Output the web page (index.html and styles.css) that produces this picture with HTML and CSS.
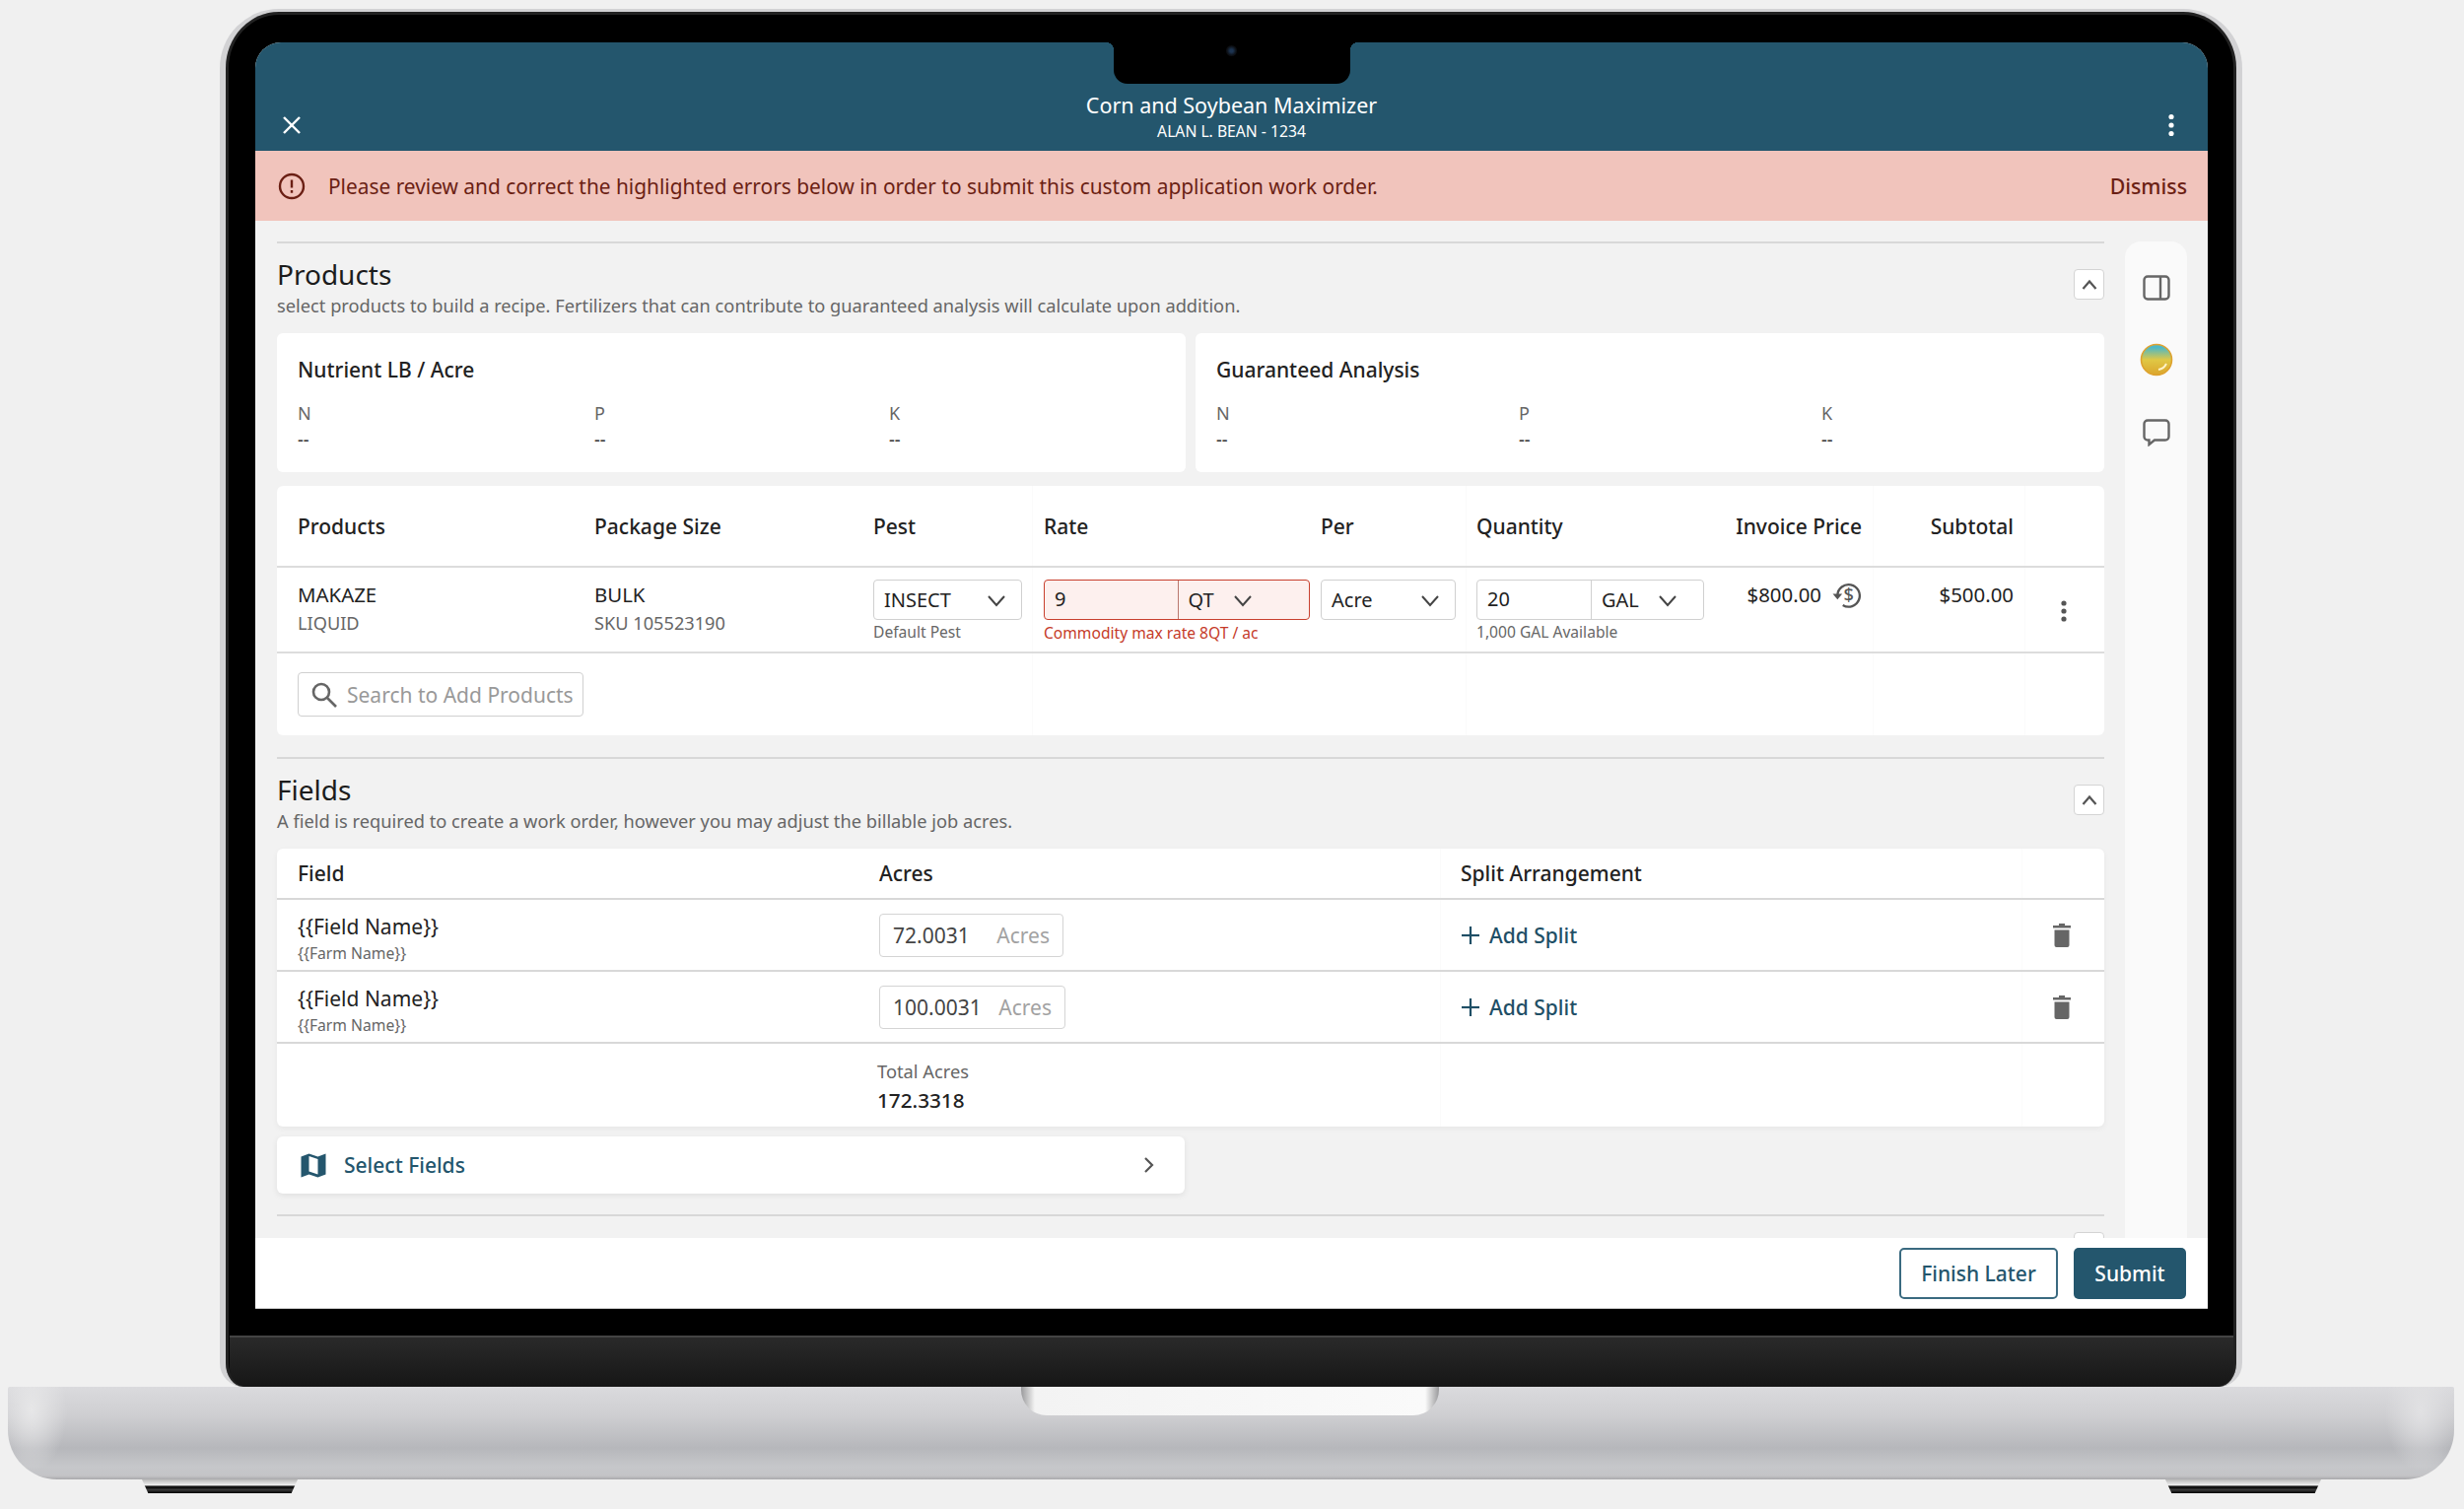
FILE: index.html
```html
<!DOCTYPE html>
<html lang="en">
<head>
    <meta charset="UTF-8">
    <meta name="viewport" content="width=device-width, initial-scale=1.0">
    <title>Corn and Soybean Maximizer</title>
    <link rel="stylesheet" href="styles.css">
</head>
<body>
    <div class="laptop">
        <div class="lid">
            <div class="screen">
                <!-- Camera notch -->
                <div class="notch"><span class="camera"></span></div>

                <!-- App bar -->
                <header class="appbar">
                    <svg class="appbar-close" width="24" height="24" viewBox="0 0 24 24" fill="none" stroke="#fff" stroke-width="2.4"><line x1="4" y1="4" x2="20" y2="20"></line><line x1="20" y1="4" x2="4" y2="20"></line></svg>
                    <div class="appbar-title">
                        <div class="appbar-name">Corn and Soybean Maximizer</div>
                        <div class="appbar-sub">ALAN L. BEAN - 1234</div>
                    </div>
                    <svg class="appbar-more" width="24" height="24" viewBox="0 0 24 24" fill="#fff"><circle cx="12" cy="3.5" r="2.6"></circle><circle cx="12" cy="12" r="2.6"></circle><circle cx="12" cy="20.5" r="2.6"></circle></svg>
                </header>

                <!-- Error banner -->
                <div class="alert">
                    <svg width="28" height="28" viewBox="0 0 28 28" fill="none" stroke="#6b1f14" stroke-width="2.4"><circle cx="14" cy="14" r="12"></circle><line x1="14" y1="7.5" x2="14" y2="15.5"></line><line x1="14" y1="18" x2="14" y2="20.8"></line></svg>
                    <span class="alert-text">Please review and correct the highlighted errors below in order to submit this custom application work order.</span>
                    <span class="alert-dismiss">Dismiss</span>
                </div>

                <div class="main">
                    <div class="content">
                        <!-- Products section -->
                        <section class="section">
                            <div class="section-head">
                                <div>
                                    <h2 class="section-title">Products</h2>
                                    <p class="section-sub">select products to build a recipe. Fertilizers that can contribute to guaranteed analysis will calculate upon addition.</p>
                                </div>
                                <button class="collapse"><svg width="18" height="18" viewBox="0 0 18 18" fill="none" stroke="#555" stroke-width="2.2"><polyline points="2.5,13 9,5.5 15.5,13"></polyline></svg></button>
                            </div>

                            <div class="summary">
                                <div class="card summary-card">
                                    <h3 class="summary-title">Nutrient LB / Acre</h3>
                                    <div class="summary-grid summary-grid-left">
                                        <div><div class="summary-label">N</div><div class="summary-value">--</div></div>
                                        <div><div class="summary-label">P</div><div class="summary-value">--</div></div>
                                        <div><div class="summary-label">K</div><div class="summary-value">--</div></div>
                                    </div>
                                </div>
                                <div class="card summary-card">
                                    <h3 class="summary-title">Guaranteed Analysis</h3>
                                    <div class="summary-grid summary-grid-right">
                                        <div><div class="summary-label">N</div><div class="summary-value">--</div></div>
                                        <div><div class="summary-label">P</div><div class="summary-value">--</div></div>
                                        <div><div class="summary-label">K</div><div class="summary-value">--</div></div>
                                    </div>
                                </div>
                            </div>

                            <div class="card products-card">
                                <div class="products-grid products-head">
                                    <div>Products</div>
                                    <div>Package Size</div>
                                    <div>Pest</div>
                                    <div>Rate</div>
                                    <div>Per</div>
                                    <div>Quantity</div>
                                    <div class="cell-right">Invoice Price</div>
                                    <div class="cell-right">Subtotal</div>
                                    <div></div>
                                </div>
                                <div class="products-grid products-row">
                                    <div class="cell-text">
                                        <div class="cell-main">MAKAZE</div>
                                        <div class="cell-sub">LIQUID</div>
                                    </div>
                                    <div class="cell-text">
                                        <div class="cell-main">BULK</div>
                                        <div class="cell-sub">SKU 105523190</div>
                                    </div>
                                    <div class="cell-input">
                                        <div class="field field-pest">
                                            <span class="field-part field-grow">INSECT
                                                <svg class="chev" width="20" height="20" viewBox="0 0 20 20" fill="none" stroke="#444" stroke-width="2"><polyline points="2,6 10,15 18,6"></polyline></svg>
                                            </span>
                                        </div>
                                        <div class="hint">Default Pest</div>
                                    </div>
                                    <div class="cell-input">
                                        <div class="field field-rate field-error">
                                            <span class="field-part field-num">9</span>
                                            <span class="field-part field-grow">QT
                                                <svg class="chev" width="20" height="20" viewBox="0 0 20 20" fill="none" stroke="#444" stroke-width="2"><polyline points="2,6 10,15 18,6"></polyline></svg>
                                            </span>
                                        </div>
                                        <div class="hint hint-error">Commodity max rate 8QT / ac</div>
                                    </div>
                                    <div class="cell-input">
                                        <div class="field field-per">
                                            <span class="field-part field-grow">Acre
                                                <svg class="chev" width="20" height="20" viewBox="0 0 20 20" fill="none" stroke="#444" stroke-width="2"><polyline points="2,6 10,15 18,6"></polyline></svg>
                                            </span>
                                        </div>
                                    </div>
                                    <div class="cell-input">
                                        <div class="field field-qty">
                                            <span class="field-part field-num">20</span>
                                            <span class="field-part field-grow">GAL
                                                <svg class="chev" width="20" height="20" viewBox="0 0 20 20" fill="none" stroke="#444" stroke-width="2"><polyline points="2,6 10,15 18,6"></polyline></svg>
                                            </span>
                                        </div>
                                        <div class="hint">1,000 GAL Available</div>
                                    </div>
                                    <div class="cell-text cell-price">
                                        <span class="cell-main">$800.00</span>
                                        <svg width="30" height="30" viewBox="0 0 28 28" fill="none" stroke="#555" stroke-width="2.2"><path d="M5 14 A10.5 10.5 0 1 1 10 23.3"></path><polygon points="0.5,12.5 9.5,12.5 5,18" fill="#555" stroke="none"></polygon><text x="15.5" y="20" text-anchor="middle" class="price-sign">$</text></svg>
                                    </div>
                                    <div class="cell-text cell-right"><div class="cell-main">$500.00</div></div>
                                    <div class="cell-more">
                                        <svg width="8" height="24" viewBox="0 0 8 24" fill="#555"><circle cx="4" cy="4" r="2.6"></circle><circle cx="4" cy="12" r="2.6"></circle><circle cx="4" cy="20" r="2.6"></circle></svg>
                                    </div>
                                </div>
                                <div class="products-search">
                                    <div class="search">
                                        <svg width="28" height="28" viewBox="0 0 28 28" fill="none" stroke="#666" stroke-width="2.6"><circle cx="11" cy="11" r="8"></circle><line x1="17" y1="17" x2="26" y2="26"></line></svg>
                                        <span>Search to Add Products</span>
                                    </div>
                                </div>
                            </div>
                        </section>

                        <!-- Fields section -->
                        <section class="section">
                            <div class="section-head">
                                <div>
                                    <h2 class="section-title">Fields</h2>
                                    <p class="section-sub">A field is required to create a work order, however you may adjust the billable job acres.</p>
                                </div>
                                <button class="collapse"><svg width="18" height="18" viewBox="0 0 18 18" fill="none" stroke="#555" stroke-width="2.2"><polyline points="2.5,13 9,5.5 15.5,13"></polyline></svg></button>
                            </div>

                            <div class="card fields-card">
                                <div class="fields-grid fields-head">
                                    <div>Field</div>
                                    <div>Acres</div>
                                    <div>Split Arrangement</div>
                                    <div></div>
                                </div>
                                <div class="fields-grid fields-row">
                                    <div>
                                        <div class="field-name">{{Field Name}}</div>
                                        <div class="farm-name">{{Farm Name}}</div>
                                    </div>
                                    <div class="acres acres-first"><span>72.0031</span><span class="acres-unit">Acres</span></div>
                                    <div class="add-split">
                                        <svg width="20" height="20" viewBox="0 0 20 20" fill="none" stroke="#1f4f66" stroke-width="2.2"><line x1="10" y1="1" x2="10" y2="19"></line><line x1="1" y1="10" x2="19" y2="10"></line></svg>
                                        Add Split
                                    </div>
                                    <div class="cell-trash">
                                        <svg width="20" height="24" viewBox="0 0 20 24" fill="#666"><path d="M7 0h6v2h6v2.5H1V2h6z"></path><path d="M2.5 6.5h15V22a2 2 0 0 1-2 2h-11a2 2 0 0 1-2-2z"></path></svg>
                                    </div>
                                </div>
                                <div class="fields-grid fields-row">
                                    <div>
                                        <div class="field-name">{{Field Name}}</div>
                                        <div class="farm-name">{{Farm Name}}</div>
                                    </div>
                                    <div class="acres"><span>100.0031</span><span class="acres-unit">Acres</span></div>
                                    <div class="add-split">
                                        <svg width="20" height="20" viewBox="0 0 20 20" fill="none" stroke="#1f4f66" stroke-width="2.2"><line x1="10" y1="1" x2="10" y2="19"></line><line x1="1" y1="10" x2="19" y2="10"></line></svg>
                                        Add Split
                                    </div>
                                    <div class="cell-trash">
                                        <svg width="20" height="24" viewBox="0 0 20 24" fill="#666"><path d="M7 0h6v2h6v2.5H1V2h6z"></path><path d="M2.5 6.5h15V22a2 2 0 0 1-2 2h-11a2 2 0 0 1-2-2z"></path></svg>
                                    </div>
                                </div>
                                <div class="fields-total">
                                    <div class="total-label">Total Acres</div>
                                    <div class="total-value">172.3318</div>
                                </div>
                            </div>

                            <div class="card select-fields">
                                <svg width="26" height="25" viewBox="0 0 26 25"><path d="M0.5 3.5 8.5 0.5 17.5 3.5 25.5 0.5V21.5L17.5 24.5 8.5 21.5 0.5 24.5z" fill="#24566d"></path><path d="M8.5 3 17.5 6V21.5L8.5 18.5z" fill="#fff"></path></svg>
                                <span class="select-fields-label">Select Fields</span>
                                <svg class="select-fields-arrow" width="12" height="18" viewBox="0 0 12 18" fill="none" stroke="#555" stroke-width="2.2"><polyline points="3,2 10,9 3,16"></polyline></svg>
                            </div>
                        </section>

                        <!-- Next section, cut off by the footer -->
                        <section class="section section-next">
                            <button class="collapse"></button>
                        </section>
                    </div>

                    <!-- Side rail -->
                    <aside class="rail">
                        <svg width="28" height="26" viewBox="0 0 28 26" fill="none" stroke="#666" stroke-width="2.4"><rect x="1.5" y="1.5" width="25" height="23" rx="3.5"></rect><line x1="18" y1="1.5" x2="18" y2="24.5"></line></svg>
                        <svg width="34" height="34" viewBox="0 0 34 34">
                            <defs>
                                <linearGradient id="ball" x1="0" y1="0" x2="0" y2="1">
                                    <stop offset="0.1" stop-color="#4db8c6"></stop>
                                    <stop offset="0.5" stop-color="#e0c845"></stop>
                                    <stop offset="1" stop-color="#dba52c"></stop>
                                </linearGradient>
                            </defs>
                            <circle cx="17" cy="17" r="15.5" fill="url(#ball)" stroke="#dea22f" stroke-width="1.6"></circle>
                            <path d="M19 27 A11 11 0 0 0 27 21" fill="none" stroke="#fff3c8" stroke-width="2"></path>
                        </svg>
                        <svg width="28" height="28" viewBox="0 0 28 28" fill="none" stroke="#666" stroke-width="2.4"><path d="M5 1.5h18a3.5 3.5 0 0 1 3.5 3.5v13a3.5 3.5 0 0 1-3.5 3.5H12l-5.5 4.5v-4.5H5A3.5 3.5 0 0 1 1.5 18V5A3.5 3.5 0 0 1 5 1.5z"></path></svg>
                    </aside>
                </div>

                <!-- Footer actions -->
                <footer class="footer">
                    <button class="btn btn-outline">Finish Later</button>
                    <button class="btn btn-solid">Submit</button>
                </footer>
            </div>
            <div class="chin"></div>
        </div>

        <div class="base"><div class="hinge"></div></div>
        <div class="feet">
            <div class="foot"></div>
            <div class="foot"></div>
        </div>
    </div>
</body>
</html>
```

FILE: styles.css
```css
* {
    box-sizing: border-box;
}

body {
    margin: 0;
    height: 1531px;
    overflow: hidden;
    background-color: #f0f0f0;
    font-family: "Noto Sans", "Open Sans", sans-serif;
    color: #222;
}

h2, h3, p {
    margin: 0;
    font-weight: 400;
}

/* Laptop shell */
.laptop {
    padding-top: 9px;
}

.lid {
    display: flex;
    flex-direction: column;
    margin-left: 223px;
    width: 2052px;
    height: 1398px;
    padding: 31px 29px 0 30px;
    background-color: #000;
    border-style: solid;
    border-width: 3px 6px 0 6px;
    border-color: #d2d2d4;
    border-radius: 60px 60px 24px 24px;
    box-shadow: inset 0 0 0 3px #222;
}

.screen {
    position: relative;
    display: flex;
    flex-direction: column;
    height: 1285px;
    background-color: #f2f2f2;
    border-radius: 26px 26px 0 0;
    overflow: hidden;
    flex-shrink: 0;
}

.chin {
    height: 52px;
    margin: 27px -26px 0;
    background: linear-gradient(#2a2a2a, #161616);
    border-top: 2px solid #444;
    border-radius: 0 0 18px 18px;
}

.notch {
    position: absolute;
    top: 0;
    left: 871px;
    width: 240px;
    height: 42px;
    background-color: #000;
    border-radius: 0 0 14px 14px;
}

.notch::before,
.notch::after {
    content: "";
    position: absolute;
    top: 0;
    width: 8px;
    height: 8px;
}

.notch::before {
    left: -8px;
    background: radial-gradient(circle at 0 100%, transparent 8px, #000 8px);
}

.notch::after {
    right: -8px;
    background: radial-gradient(circle at 100% 100%, transparent 8px, #000 8px);
}

.camera {
    position: absolute;
    top: 3px;
    left: 114px;
    width: 11px;
    height: 11px;
    border-radius: 50%;
    background: radial-gradient(circle, #1c3350 20%, #0c0f14 60%);
}

.base {
    display: flex;
    justify-content: center;
    width: 2482px;
    height: 94px;
    margin-left: 8px;
    border-radius: 2px 2px 50px 50px;
    background:
        radial-gradient(ellipse 36px 62px at 24px 24px, rgba(232, 232, 233, 0.95), rgba(232, 232, 233, 0)),
        radial-gradient(ellipse 36px 62px at calc(100% - 34px) 24px, rgba(226, 226, 228, 0.95), rgba(226, 226, 228, 0)),
        linear-gradient(#dadadd 0, #cfcfd2 30%, #b6b7bb 66%, #c6c7ca 86%, #c4c4c7 96%, #a9a9ab 100%);
}

.hinge {
    width: 424px;
    height: 29px;
    margin-left: -2px;
    border-radius: 0 0 26px 26px;
    background: linear-gradient(90deg, #9a9a9c, #f3f3f3 14px, #fafafa calc(100% - 14px), #9a9a9c);
}

.feet {
    display: flex;
    justify-content: space-between;
    margin: 0 145px 0 144px;
}

.foot {
    width: 158px;
    height: 14px;
    clip-path: polygon(0 0, 100% 0, 96% 100%, 4% 100%);
    background: linear-gradient(#b8b8b8 0, #ededed 40%, #777 46%, #000 55%, #3a3a3a 75%, #000 100%);
}

/* App bar */
.appbar {
    display: grid;
    grid-template-columns: 1fr auto 1fr;
    align-items: end;
    height: 110px;
    flex-shrink: 0;
    padding: 0 25px 7px 25px;
    background-color: #24566d;
    color: #fff;
}

.appbar-close {
    margin: 0 0 7px 0;
}

.appbar-more {
    justify-self: end;
    margin: 0 0 7px 0;
}

.appbar-title {
    text-align: center;
}

.appbar-name {
    font-size: 21.5px;
    line-height: 26px;
}

.appbar-sub {
    font-size: 15.7px;
    line-height: 26px;
}

/* Error banner */
.alert {
    display: flex;
    align-items: center;
    height: 71px;
    flex-shrink: 0;
    padding: 0 21px 0 23px;
    background-color: #f1c4bc;
    color: #6b1f14;
}

.alert-text {
    flex: 1;
    margin-left: 23px;
    font-size: 20.87px;
}

.alert-dismiss {
    font-size: 21.3px;
    font-weight: 500;
}

/* Main area */
.main {
    display: flex;
    flex: 1;
    min-height: 0;
    overflow: hidden;
    padding: 21px 21px 0 22px;
}

.content {
    flex: 1;
    min-width: 0;
}

.rail {
    display: flex;
    flex-direction: column;
    align-items: center;
    gap: 43px;
    width: 63px;
    margin-left: 21px;
    padding-top: 34px;
    background-color: #fafafa;
    border-radius: 16px 16px 0 0;
}

.section {
    border-top: 2px solid #d8d8d8;
    padding-top: 13px;
    margin-bottom: 22px;
}

.section-head {
    display: flex;
    justify-content: space-between;
    align-items: flex-start;
    margin-bottom: 15px;
}

.section-title {
    font-size: 28px;
    line-height: 37px;
    color: #1c1c1c;
}

.section-sub {
    font-size: 18.25px;
    line-height: 26px;
    color: #666;
}

.collapse {
    display: flex;
    align-items: center;
    justify-content: center;
    width: 31px;
    height: 31px;
    margin-top: 13px;
    padding: 0;
    background-color: #fff;
    border: 1.5px solid #d4d4d4;
    border-radius: 4px;
}

.section-next {
    display: flex;
    justify-content: flex-end;
    margin-top: -1px;
    padding-top: 16px;
}

.section-next .collapse {
    margin-top: 0;
}

.card {
    background-color: #fff;
    border-radius: 6px;
}

/* Nutrient cards */
.summary {
    display: flex;
    gap: 10px;
    margin-bottom: 14px;
}

.summary-card {
    flex: 1;
    height: 141px;
    padding: 23px 21px 0;
}

.summary-title {
    font-size: 21px;
    line-height: 28px;
    font-weight: 500;
}

.summary-grid {
    display: grid;
    margin-top: 16px;
}

.summary-grid-left {
    grid-template-columns: 301px 299px 1fr;
}

.summary-grid-right {
    grid-template-columns: 307px 307px 1fr;
}

.summary-label {
    font-size: 18px;
    line-height: 28px;
    color: #666;
}

.summary-value {
    font-size: 18px;
    line-height: 24px;
    font-weight: 500;
    color: #444;
}

/* Products table */
.products-card {
    height: 253px;
    background:
        linear-gradient(#fbfbfb, #fbfbfb) 766px 0 / 1px 100% no-repeat,
        linear-gradient(#fbfbfb, #fbfbfb) 1206px 0 / 1px 100% no-repeat,
        linear-gradient(#fbfbfb, #fbfbfb) 1619px 0 / 1px 100% no-repeat,
        linear-gradient(#fbfbfb, #fbfbfb) 1773px 0 / 1px 100% no-repeat,
        #fff;
}

.products-grid {
    display: grid;
    grid-template-columns: 301px 283px 173px 281px 158px 251px 140px 154px 1fr;
    padding-left: 21px;
    border-bottom: 2px solid #dcdcdc;
}

.products-head {
    height: 83px;
    align-items: center;
    font-size: 21px;
    font-weight: 500;
}

.products-row {
    height: 87px;
}

.cell-right {
    text-align: right;
}

.cell-text {
    padding-top: 13px;
}

.cell-input {
    padding-top: 12px;
}

.cell-main {
    font-size: 20.4px;
    line-height: 28px;
}

.cell-sub {
    margin-top: 1px;
    font-size: 18.2px;
    line-height: 28px;
    color: #666;
}

.cell-price {
    display: flex;
    justify-content: flex-end;
    align-items: flex-start;
    gap: 11px;
}

.price-sign {
    font-size: 17px;
    font-weight: 500;
    fill: #555;
    stroke: none;
}

.cell-more {
    display: flex;
    justify-content: center;
    padding: 32px 0 0 10px;
}

.field {
    display: flex;
    height: 41px;
    font-size: 20px;
    line-height: 37px;
    background-color: #fff;
    border: 1.5px solid #d0d0d0;
    border-radius: 4px;
}

.field-pest { width: 151px; }
.field-rate { width: 270px; }
.field-per { width: 137px; }
.field-qty { width: 231px; }

.field-error {
    background-color: #fdf0ee;
    border-color: #c8402e;
}

.field-part {
    padding: 0 10px;
    white-space: nowrap;
}

.field-num {
    border-right: 1.5px solid #d0d0d0;
}

.field-error .field-num {
    width: 135.5px;
    border-right-color: #b9786e;
}

.field-qty .field-num {
    width: 116px;
}

.field-grow {
    display: flex;
    align-items: center;
    justify-content: space-between;
    flex: 1;
}

.field-pest .chev,
.field-per .chev {
    margin-right: 5px;
}

.field-rate .field-grow,
.field-qty .field-grow {
    justify-content: flex-start;
}

.field-rate .chev,
.field-qty .chev {
    margin-left: 19px;
}

.hint {
    margin-top: 2px;
    font-size: 15.6px;
    line-height: 20px;
    color: #666;
}

.hint-error {
    margin-top: 3px;
    color: #c53a28;
}

.products-search {
    padding: 19px 0 0 21px;
}

.search {
    display: flex;
    align-items: center;
    gap: 9px;
    width: 290px;
    height: 45px;
    padding-left: 12px;
    font-size: 21px;
    color: #999;
    background-color: #fff;
    border: 1.5px solid #d0d0d0;
    border-radius: 4px;
}

/* Fields table */
.fields-card {
    background:
        linear-gradient(#fbfbfb, #fbfbfb) 1180px 0 / 1px 100% no-repeat,
        linear-gradient(#fbfbfb, #fbfbfb) 1770px 0 / 1px 100% no-repeat,
        #fff;
    box-shadow: 0 2px 6px rgba(0, 0, 0, 0.05);
}

.fields-grid {
    display: grid;
    grid-template-columns: 590px 590px 570px 1fr;
    align-items: center;
    padding-left: 21px;
    border-bottom: 2px solid #d8d8d8;
}

.fields-head {
    height: 52px;
    font-size: 21px;
    font-weight: 500;
}

.fields-row {
    height: 73px;
}

.field-name {
    font-size: 21px;
    line-height: 28px;
    margin-top: 7px;
}

.farm-name {
    margin-top: 1px;
    font-size: 15.7px;
    line-height: 24px;
    color: #666;
}

.acres {
    display: flex;
    align-items: center;
    justify-content: space-between;
    width: 189px;
    height: 44px;
    padding: 0 13px;
    font-size: 21px;
    color: #444;
    border: 1.5px solid #d4d4d4;
    border-radius: 4px;
}

.acres-first {
    width: 187px;
}

.acres-unit {
    color: #a2a2a2;
}

.add-split {
    display: flex;
    align-items: center;
    gap: 9px;
    font-size: 21px;
    font-weight: 500;
    color: #1f4f66;
}

.cell-trash {
    display: flex;
    justify-content: flex-end;
    padding-right: 33px;
}

.fields-total {
    height: 84px;
    padding: 13px 0 0 609px;
}

.total-label {
    font-size: 18.3px;
    line-height: 30px;
    color: #666;
}

.total-value {
    font-size: 20.7px;
    line-height: 28px;
    font-weight: 500;
}

.select-fields {
    display: flex;
    align-items: center;
    width: 921px;
    height: 58px;
    margin-top: 10px;
    padding: 0 31px 0 24px;
    box-shadow: 0 2px 6px rgba(0, 0, 0, 0.08);
}

.select-fields-label {
    flex: 1;
    margin-left: 18px;
    font-size: 21px;
    font-weight: 500;
    color: #24566d;
}

/* Footer */
.footer {
    display: flex;
    justify-content: flex-end;
    gap: 16px;
    height: 72px;
    flex-shrink: 0;
    padding: 10px 22px 0 0;
    background-color: #fff;
    border-bottom: 1px solid #ccc;
}

.btn {
    height: 52px;
    font-family: inherit;
    font-size: 21px;
    font-weight: 500;
    border-radius: 5px;
}

.btn-outline {
    width: 161px;
    color: #24566d;
    background-color: #fff;
    border: 2px solid #3a6a80;
}

.btn-solid {
    width: 114px;
    color: #fff;
    background-color: #24566d;
    border: none;
}
```
